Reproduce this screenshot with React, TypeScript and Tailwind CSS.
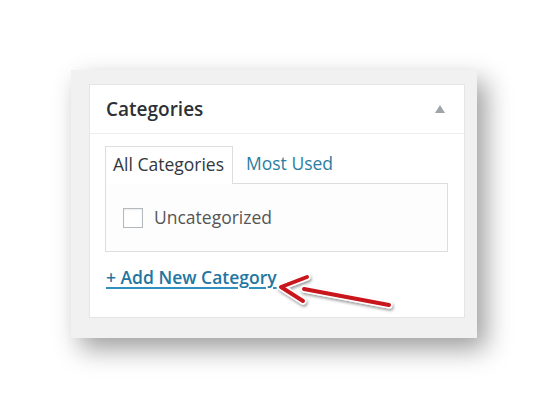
import React from "react";

const Arrow = () => (
  <svg
    className="absolute left-[272px] top-[268px]"
    width="130"
    height="50"
    viewBox="0 0 130 50"
    fill="none"
  >
    <defs>
      <filter id="sh" x="-20%" y="-50%" width="140%" height="200%">
        <feDropShadow dx="1" dy="2" stdDeviation="1.5" floodColor="#000" floodOpacity="0.4" />
      </filter>
    </defs>
    <g filter="url(#sh)" strokeLinecap="round" strokeLinejoin="round">
      <g stroke="#ffffff" strokeWidth="7">
        <path d="M35 9 L9 19 L31 33" />
        <path d="M32 21 L117 37" />
      </g>
      <g stroke="#c8141c" strokeWidth="4">
        <path d="M35 9 L9 19 L31 33" />
        <path d="M32 21 L117 37" />
      </g>
    </g>
  </svg>
);

const App = () => {
  return (
    <div className="relative w-[548px] h-[409px] bg-white pl-[71px] pt-[70px] font-['Open_Sans',sans-serif]">
      {/* panneau gris */}
      <div className="w-[406px] h-[268px] bg-[#f1f1f1] pl-[18px] pr-[12px] pt-[14px] pb-[20px] shadow-[9px_11px_24px_rgba(0,0,0,0.38)]">
        {/* boîte Categories */}
        <div className="h-full bg-white border border-[#e5e5e5]">
          <div className="flex items-center justify-between h-[49px] pl-[16px] pr-[19px] border-b border-[#eeeeee]">
            <h2 className="text-[19px] font-semibold text-[#2c3136] leading-none">Categories</h2>
            <span className="block w-0 h-0 border-l-[5px] border-r-[5px] border-b-[8px] border-l-transparent border-r-transparent border-b-[#a0a5aa]" />
          </div>

          <div className="pl-[15px] pr-[16px] pt-[11px]">
            {/* onglets */}
            <div className="flex items-end h-[38px]">
              <div className="h-[38px] w-[128px] border border-b-0 border-[#dddddd] bg-white flex items-center pb-[3px] pl-[7px] text-[17.5px] text-[#32373c] relative z-10 -mb-px whitespace-nowrap">
                All Categories
              </div>
              <div className="h-[37px] flex items-center pb-[3px] pl-[13px] text-[17.5px] text-[#2b7ea1]">
                Most Used
              </div>
            </div>
            {/* liste */}
            <div className="h-[69px] border border-[#dddddd] bg-[#fdfdfd] flex items-center pl-[17px]">
              <span className="w-[20px] h-[20px] border border-[#b4b9be] bg-white shadow-[inset_0_1px_2px_rgba(0,0,0,0.08)]" />
              <span className="ml-[11px] text-[17.5px] text-[#555555]">Uncategorized</span>
            </div>
            {/* lien */}
            <a className="inline-block mt-[12px] ml-px text-[17.5px] leading-[26px] font-semibold text-[#2376a0] underline underline-offset-[3px] decoration-[#2e8fc0] decoration-[1.5px]">
              + Add New Category
            </a>
          </div>
        </div>
      </div>
      <Arrow />
    </div>
  );
};

export default App;
